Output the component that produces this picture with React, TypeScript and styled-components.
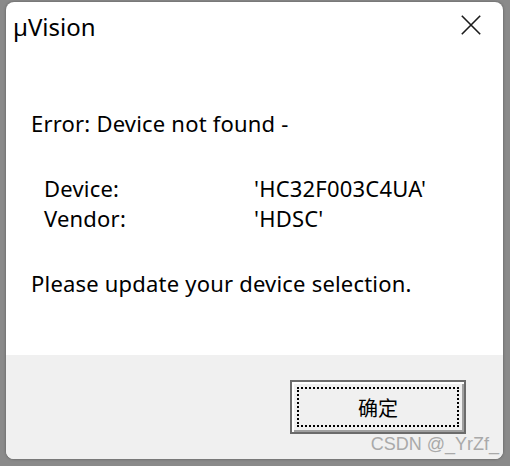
import React from "react";
import styled, { createGlobalStyle } from "styled-components";

const GlobalStyle = createGlobalStyle`
  html, body {
    margin: 0;
    padding: 0;
    background: #8a8a8a;
  }

  body {
    width: 510px;
    height: 466px;
    overflow: hidden;
  }
`;

const Screen = styled.div`
  position: relative;
  width: 510px;
  height: 466px;
  padding: 2px 0 0 6px;
  box-sizing: border-box;
`;

const Dialog = styled.div`
  display: flex;
  flex-direction: column;
  width: 497px;
  height: 457px;
  border-radius: 8px;
  overflow: hidden;
  background: #ffffff;
  box-shadow: 0 0 3px rgba(0, 0, 0, 0.35);
  font-family: "Noto Sans", "Open Sans", sans-serif;
  color: #000;
`;

const TitleBar = styled.div`
  display: flex;
  align-items: flex-start;
  justify-content: space-between;
  height: 50px;
  padding: 10px 22px 0 7px;
  box-sizing: border-box;
`;

const Title = styled.span`
  font-size: 24px;
  line-height: 30px;
`;

const CloseButton = styled.button`
  display: flex;
  margin-top: 3px;
  padding: 0;
  border: 0;
  background: none;
  color: #1b1b1b;
`;

const Body = styled.div`
  flex: 1;
  display: flex;
  flex-direction: column;
  padding: 56px 0 0 25px;
  font-size: 22px;
  letter-spacing: 0.2px;
  line-height: 30px;
`;

const Line = styled.div<{ $gap?: number }>`
  margin-top: ${({ $gap }) => $gap ?? 0}px;
`;

const Details = styled.div`
  display: grid;
  grid-template-columns: 210px auto;
  margin-top: 35px;
  padding-left: 13px;
`;

const Footer = styled.div`
  display: flex;
  justify-content: flex-end;
  height: 104px;
  padding: 25px 37px 0 0;
  box-sizing: border-box;
  background: #f0f0f0;
`;

const DefaultButton = styled.button`
  width: 176px;
  height: 54px;
  padding: 5px;
  box-sizing: border-box;
  border: 2px solid #6b6b6b;
  background: #f0f0f0;
  box-shadow: inset 2px 2px #ffffff, inset -2px -2px #a0a0a0;
  font-family: "Noto Sans CJK SC", "Noto Sans", sans-serif;
  font-size: 20px;
  color: #000;
`;

const FocusRect = styled.span`
  display: flex;
  align-items: center;
  justify-content: center;
  height: 100%;
  border: 2px dotted #000;
  box-sizing: border-box;
`;

const Watermark = styled.span`
  position: absolute;
  right: 11px;
  top: 434px;
  font-family: "Liberation Sans", Arial, sans-serif;
  font-size: 18px;
  color: #a9a9a9;
`;

const CloseIcon = () => (
  <svg width="20" height="20" viewBox="0 0 20 20" fill="none">
    <path
      d="M0.8 0.8 L19.2 19.2 M19.2 0.8 L0.8 19.2"
      stroke="currentColor"
      strokeWidth="1.6"
    />
  </svg>
);

const App: React.FC = () => (
  <>
    <GlobalStyle />
    <Screen>
      <Dialog>
        <TitleBar>
          <Title>µVision</Title>
          <CloseButton aria-label="Close">
            <CloseIcon />
          </CloseButton>
        </TitleBar>
        <Body>
          <Line>Error: Device not found -</Line>
          <Details>
            <span>Device:</span>
            <span>'HC32F003C4UA'</span>
            <span>Vendor:</span>
            <span>'HDSC'</span>
          </Details>
          <Line $gap={35}>Please update your device selection.</Line>
        </Body>
        <Footer>
          <DefaultButton>
            <FocusRect>确定</FocusRect>
          </DefaultButton>
        </Footer>
      </Dialog>
      <Watermark>CSDN @_YrZf_</Watermark>
    </Screen>
  </>
);

export default App;
